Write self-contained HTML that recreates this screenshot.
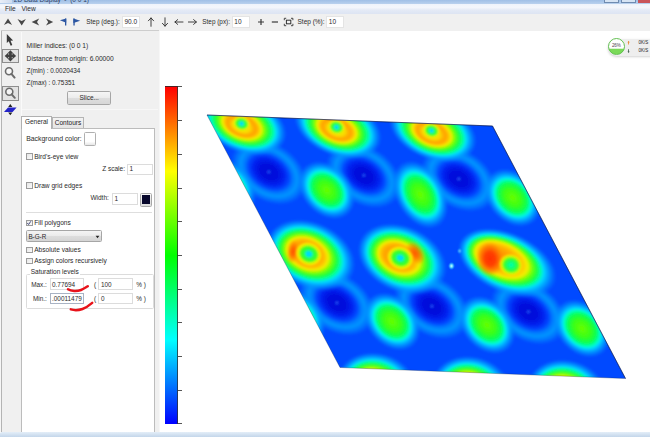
<!DOCTYPE html>
<html><head><meta charset="utf-8">
<style>
html,body{margin:0;padding:0;background:#fff;}
body{width:650px;height:437px;overflow:hidden;position:relative;font-family:"Liberation Sans",sans-serif;font-size:6.5px;color:#222;}
.a{position:absolute;}
.t{position:absolute;white-space:pre;line-height:8px;height:8px;color:#2a2a2a;}
.inp{position:absolute;background:#fff;border:1px solid #dcdcdc;box-sizing:border-box;}
.cb{position:absolute;width:6.4px;height:6.4px;margin:-0.2px 0 0 -0.2px;box-sizing:border-box;border:0.9px solid #9c9c9c;background:linear-gradient(135deg,#e6e6e6,#fbfbfb);}
.ic{position:absolute;}
</style></head><body>
<!-- title bar -->
<div class="a" style="left:0;top:0;width:650px;height:4px;background:linear-gradient(#9fbfe6,#b9d1ee);"></div>
<div class="a" style="left:0;top:0;width:12px;height:3.4px;background:linear-gradient(90deg,#e9eef7,#cfdcef);"></div>
<div class="a" style="left:0;top:0;width:120px;height:3.6px;overflow:hidden;"><div class="t" style="left:13.8px;top:-3.7px;font-size:6.5px;color:#16284a;opacity:.85;">2D Data Display  -  (0 0 1)</div></div>
<div class="a" style="left:604px;top:0;width:15px;height:2.5px;background:#d6e4f4;border:0.5px solid #6f8bb0;border-top:0;box-sizing:border-box"></div>
<div class="a" style="left:621px;top:0;width:14.5px;height:2.5px;background:#d6e4f4;border:0.5px solid #6f8bb0;border-top:0;box-sizing:border-box"></div>
<div class="a" style="left:637.5px;top:0;width:13px;height:2.5px;background:#c9555a;"></div>
<!-- menu bar -->
<div class="a" style="left:0;top:4px;width:650px;height:10.5px;background:linear-gradient(#eef3fb 0%,#f4f7fc 30%,#e4eaf6 55%,#dbe3f2 100%);"></div>
<div class="a" style="left:0;top:13.6px;width:650px;height:0.8px;background:#c9ccd6;"></div>
<div class="t" style="left:5px;top:4.7px;font-size:6.6px;">File</div>
<div class="t" style="left:21.5px;top:4.7px;font-size:6.6px;">View</div>
<!-- toolbar -->
<div class="a" style="left:0;top:14.4px;width:650px;height:16.2px;background:#f0f0f0;"></div>
<!-- body bg left -->
<div class="a" style="left:0;top:30.5px;width:159px;height:402px;background:#f0f0f0;"></div>
<div class="a" style="left:159px;top:30.5px;width:1px;height:402px;background:#f7f7f7;"></div>
<!-- bottom strip -->
<div class="a" style="left:0;top:432px;width:650px;height:5px;background:linear-gradient(#e4eef8,#c3d6ea);"></div>
<!-- toolbar icons -->
<svg class="a" style="left:0;top:15px" width="650" height="16" viewBox="0 15 650 16">
<g fill="#484848" stroke="none">
<path d="M8 18.6 L12.1 25 L8 23 L3.9 25 Z"/>
<path d="M21.7 25.4 L25.9 19 L21.7 21 L17.5 19 Z"/>
<path d="M31.6 22 L39.2 18.4 L37 22 L39.2 25.6 Z"/>
<path d="M53.2 22 L46 18.4 L48.2 22 L46 25.6 Z"/>
</g>
<g fill="#2c56a2">
<path d="M59.9 20.3 L66.2 18.5 L66.2 22.8 Z"/><rect x="65" y="18.5" width="1.3" height="7"/>
<path d="M80.2 20.7 L73.4 18.5 L73.4 23 Z"/><rect x="73.4" y="18.5" width="1.3" height="7"/>
</g>
<g fill="none" stroke="#2e2e2e" stroke-width="0.9" stroke-linecap="round" stroke-linejoin="round">
<path d="M151 26.3 V18 M148.4 20.8 L151 17.9 L153.6 20.8"/>
<path d="M165 17.8 V26.1 M162.4 23.3 L165 26.2 L167.6 23.3"/>
<path d="M183 22 H175 M177.7 19.6 L174.9 22 L177.7 24.4"/>
<path d="M188.4 22 H196.3 M193.6 19.6 L196.4 22 L193.6 24.4"/>
</g>
<g fill="none" stroke="#3a3a3a" stroke-width="1.2">
<path d="M258 22 H264 M261 19 V25"/>
<path d="M271.8 22 H278"/>
</g>
<g fill="none" stroke="#333" stroke-width="0.9">
<path d="M284.3 20.2 V18.3 H286.2 M291 18.3 H292.9 V20.2 M292.9 23.8 V25.7 H291 M286.2 25.7 H284.3 V23.8"/>
<rect x="286.4" y="20.2" width="4.4" height="3.6" stroke-width="1"/>
</g>
</svg>
<div class="t" style="left:86.3px;top:18.1px;font-size:6.4px;">Step (deg.):</div>
<div class="inp" style="left:122.3px;top:15.5px;width:18.2px;height:12.2px;border-color:#e4e4e4"></div>
<div class="t" style="left:124.4px;top:18.1px;font-size:6.5px;">90.0</div>
<div class="t" style="left:202.3px;top:18.1px;font-size:6.4px;">Step (px):</div>
<div class="inp" style="left:231.8px;top:15.5px;width:18.4px;height:12.2px;border-color:#e4e4e4"></div>
<div class="t" style="left:234.3px;top:18.1px;font-size:6.5px;">10</div>
<div class="t" style="left:297.5px;top:18.1px;font-size:6.5px;">Step (%):</div>
<div class="inp" style="left:326.3px;top:15.5px;width:18.2px;height:12.2px;border-color:#e4e4e4"></div>
<div class="t" style="left:328.8px;top:18.1px;font-size:6.5px;">10</div>
<!-- frame lines -->
<div class="a" style="left:0;top:30.5px;width:1.4px;height:402px;background:#f6f6f6;"></div>
<div class="a" style="left:1.2px;top:30.2px;width:158px;height:0.7px;background:#cdcdcd;"></div>
<div class="a" style="left:1.2px;top:30.6px;width:0.7px;height:401.5px;background:#b4b4b4;"></div>
<div class="a" style="left:20.6px;top:31.5px;width:0.6px;height:84px;background:#fafafa;"></div>
<!-- left strip icons -->
<div class="a" style="left:2.2px;top:49.2px;width:16.5px;height:14.3px;box-sizing:border-box;border:0.8px solid #8e8e8e;background:#e3e3e3;"></div>
<div class="a" style="left:2.2px;top:86px;width:16.5px;height:14.6px;box-sizing:border-box;border:0.8px solid #8e8e8e;background:#e3e3e3;"></div>
<svg class="a" style="left:0;top:31px" width="22" height="88" viewBox="0 31 22 88">
<path d="M6.8 33.9 L6.8 43 L8.8 41.3 L10.7 45.8 L12.3 45.1 L10.5 40.8 L13.1 40.6 Z" fill="#3a3a3a"/>
<g fill="#404040">
<path d="M10.4 50.2 L13.5 53.6 L11.7 53.6 L11.7 54.6 L12.7 54.6 L12.7 52.8 L16.1 55.9 L12.7 59 L12.7 57.2 L11.7 57.2 L11.7 58.2 L13.5 58.2 L10.4 61.6 L7.3 58.2 L9.1 58.2 L9.1 57.2 L8.1 57.2 L8.1 59 L4.7 55.9 L8.1 52.8 L8.1 54.6 L9.1 54.6 L9.1 53.6 L7.3 53.6 Z"/>
</g>
<g fill="none" stroke="#6c6c6c" stroke-width="1.6">
<circle cx="9" cy="71.3" r="3.5" fill="#f8f8f8"/><path d="M11.4 73.8 L14.6 77.6" stroke-width="2" stroke-linecap="round"/>
<circle cx="9.3" cy="91.8" r="3.5" fill="#f4f4f4"/><path d="M11.7 94.3 L14.8 97.8" stroke-width="2" stroke-linecap="round"/>
</g>
<path d="M4 112 L8 107.6 L16.6 107.6 L12.6 112 Z" fill="#2323c8"/>
<path d="M10.3 104 L12.4 107 L8.2 107 Z M10.3 115.2 L12.4 112.4 L8.2 112.4 Z" fill="#222"/>
</svg>
<!-- side panel -->
<div class="t" style="left:26.6px;top:42px;font-size:6.7px;">Miller indices: (0 0 1)</div>
<div class="t" style="left:26.6px;top:54.5px;font-size:6.68px;">Distance from origin: 6.00000</div>
<div class="t" style="left:26.6px;top:66.7px;font-size:6.37px;">Z(min) : 0.0020434</div>
<div class="t" style="left:26.6px;top:78.7px;font-size:6.37px;">Z(max) : 0.75351</div>
<div class="a" style="left:67.4px;top:90.6px;width:43.6px;height:14.2px;box-sizing:border-box;border:0.8px solid #a6a6a6;border-radius:1.6px;background:linear-gradient(#f6f6f6 0%,#ececec 48%,#dedede 52%,#d6d6d6 100%);"></div>
<div class="t" style="left:67.6px;top:93.6px;width:43.2px;text-align:center;font-size:6.5px;">Slice...</div>
<div class="a" style="left:22px;top:108.6px;width:136px;height:0.8px;background:#f7f7f7;"></div>
<!-- tab page -->
<div class="a" style="left:20.8px;top:128px;width:134.6px;height:304.2px;box-sizing:border-box;border:0.8px solid #bcbcbc;border-bottom:0;background:#fff;"></div>
<div class="a" style="left:52px;top:117.3px;width:32px;height:11px;box-sizing:border-box;border:0.8px solid #b4b4b4;border-bottom:0;background:linear-gradient(#f3f3f3,#e4e4e4);"></div>
<div class="a" style="left:20.8px;top:115.8px;width:31.4px;height:13px;box-sizing:border-box;border:0.8px solid #b0b0b0;border-bottom:0;background:#fff;"></div>
<div class="t" style="left:20.8px;top:117.6px;width:31.4px;text-align:center;font-size:6.5px;">General</div>
<div class="t" style="left:52px;top:118.6px;width:32px;text-align:center;font-size:6.5px;color:#1c1c1c;">Contours</div>
<div class="t" style="left:26.2px;top:134.8px;font-size:6.9px;">Background color:</div>
<div class="a" style="left:83.8px;top:132px;width:12px;height:13.8px;box-sizing:border-box;border:0.8px solid #b0b0b0;border-radius:1.5px;background:linear-gradient(#fff 70%,#e6e6e6);"></div>
<div class="cb" style="left:26.4px;top:153.3px;"></div>
<div class="t" style="left:34.2px;top:152.7px;font-size:6.6px;">Bird's-eye view</div>
<div class="t" style="left:102.2px;top:164.8px;font-size:6.5px;">Z scale:</div>
<div class="inp" style="left:126.5px;top:163.5px;width:26.4px;height:11.6px;"></div>
<div class="t" style="left:129.6px;top:164.8px;font-size:6.5px;">1</div>
<div class="cb" style="left:26.4px;top:182.3px;"></div>
<div class="t" style="left:34.2px;top:181.8px;font-size:6.6px;">Draw grid edges</div>
<div class="t" style="left:90.4px;top:194.4px;font-size:6.5px;">Width:</div>
<div class="inp" style="left:111.5px;top:193px;width:26.4px;height:12px;"></div>
<div class="t" style="left:114.6px;top:194.6px;font-size:6.5px;">1</div>
<div class="a" style="left:140.3px;top:192.6px;width:11.8px;height:14px;box-sizing:border-box;border:0.8px solid #a8a8a8;border-radius:1.5px;background:linear-gradient(#f8f8f8,#dcdcdc);"></div>
<div class="a" style="left:142.2px;top:195.3px;width:8px;height:8.8px;background:#07072c;"></div>
<div class="a" style="left:26px;top:212px;width:126px;height:0.7px;background:#dedede;"></div>
<div class="cb" style="left:26.4px;top:220.2px;"></div>
<svg class="a" style="left:26.4px;top:220.2px" width="6" height="6" viewBox="0 0 6 6"><path d="M1.3 3 L2.6 4.5 L4.8 1.3" fill="none" stroke="#333a70" stroke-width="0.9"/></svg>
<div class="t" style="left:34.2px;top:219px;font-size:6.6px;">Fill polygons</div>
<div class="a" style="left:26px;top:230px;width:76px;height:12.2px;box-sizing:border-box;border:0.8px solid #a6a6a6;border-radius:1.5px;background:linear-gradient(#f4f4f4 0%,#ebebeb 48%,#dddddd 52%,#d4d4d4 100%);"></div>
<div class="t" style="left:28.4px;top:232.5px;font-size:6.3px;">B-G-R</div>
<svg class="a" style="left:95px;top:234.5px" width="5" height="4" viewBox="0 0 5 4"><path d="M0.6 0.8 L4.4 0.8 L2.5 3.2 Z" fill="#222"/></svg>
<div class="cb" style="left:26.4px;top:246.7px;"></div>
<div class="t" style="left:34.2px;top:245.6px;font-size:6.6px;">Absolute values</div>
<div class="cb" style="left:26.4px;top:257.8px;"></div>
<div class="t" style="left:34.2px;top:256.7px;font-size:6.6px;">Assign colors recursively</div>
<!-- group box -->
<div class="a" style="left:26px;top:273.5px;width:127.5px;height:35.4px;box-sizing:border-box;border:0.8px solid #dcdcdc;border-radius:1.5px;"></div>
<div class="t" style="left:29.5px;top:267.5px;font-size:6.5px;background:#fff;padding:0 1.2px;">Saturation levels</div>
<div class="t" style="left:31.2px;top:280.7px;font-size:6.4px;">Max.:</div>
<div class="inp" style="left:49.6px;top:278.4px;width:34.3px;height:12.1px;"></div>
<div class="t" style="left:52px;top:280.7px;font-size:6.4px;">0.77694</div>
<div class="t" style="left:94px;top:280.7px;font-size:6.4px;">(</div>
<div class="inp" style="left:98px;top:278.4px;width:34.8px;height:12.1px;"></div>
<div class="t" style="left:100.9px;top:280.7px;font-size:6.4px;">100</div>
<div class="t" style="left:136.2px;top:280.7px;font-size:6.4px;">% )</div>
<div class="t" style="left:33px;top:295px;font-size:6.4px;">Min.:</div>
<div class="inp" style="left:49.6px;top:293px;width:34.3px;height:11.4px;border-color:#a9b3c4;"></div>
<div class="t" style="left:52px;top:295px;font-size:6.4px;">.00011479</div>
<div class="t" style="left:94px;top:295px;font-size:6.4px;">(</div>
<div class="inp" style="left:98px;top:293px;width:34.8px;height:11.4px;"></div>
<div class="t" style="left:100.9px;top:295px;font-size:6.4px;">0</div>
<div class="t" style="left:136.2px;top:295px;font-size:6.4px;">% )</div>
<!-- red scribbles -->
<svg class="a" style="left:60px;top:280px" width="40" height="34" viewBox="60 280 40 34">
<g fill="none" stroke="#e8121a" stroke-width="2.5" stroke-linecap="round">
<path d="M68 289.2 C71 291.3 77 291.5 81 290 C84 288.9 86 287.3 87.8 286.2"/>
<path d="M70.8 309.4 C74 310.4 79 310.2 82.5 309 C86.5 307.6 89.5 305.2 92.2 302.9"/>
</g></svg>
<!-- colorbar -->
<div class="a" style="left:164.7px;top:86.7px;width:12.9px;height:337px;background:linear-gradient(#ff0000 0%,#ffff00 25%,#00ff00 50%,#00ffff 75%,#0000ff 100%);"></div>
<div class="a" style="left:164.7px;top:86.4px;width:13.2px;height:0.7px;background:#502020;"></div>
<div class="a" style="left:177.4px;top:86.4px;width:0.7px;height:337.6px;background:#303030;opacity:.8"></div>
<div class="a" style="left:177.8px;top:86.4px;width:4.2px;height:0.7px;background:#555;"></div>
<div class="a" style="left:177.8px;top:120.1px;width:4.2px;height:0.7px;background:#555;"></div>
<div class="a" style="left:177.8px;top:153.8px;width:4.2px;height:0.7px;background:#555;"></div>
<div class="a" style="left:177.8px;top:187.5px;width:4.2px;height:0.7px;background:#555;"></div>
<div class="a" style="left:177.8px;top:221.2px;width:4.2px;height:0.7px;background:#555;"></div>
<div class="a" style="left:177.8px;top:254.9px;width:4.2px;height:0.7px;background:#555;"></div>
<div class="a" style="left:177.8px;top:288.6px;width:4.2px;height:0.7px;background:#555;"></div>
<div class="a" style="left:177.8px;top:322.3px;width:4.2px;height:0.7px;background:#555;"></div>
<div class="a" style="left:177.8px;top:356.0px;width:4.2px;height:0.7px;background:#555;"></div>
<div class="a" style="left:177.8px;top:389.7px;width:4.2px;height:0.7px;background:#555;"></div>
<div class="a" style="left:177.8px;top:423.4px;width:4.2px;height:0.7px;background:#555;"></div>
<svg class="a" style="left:0;top:0" width="650" height="437" viewBox="0 0 650 437">
<defs>
<clipPath id="para"><path d="M207.0 115.0 L492.5 126.0 L625.5 378.5 L340.0 367.5 Z"/></clipPath>
<radialGradient id="gr" cx="0.5" cy="0.5" r="0.5" fx="0.425" fy="0.5"><stop offset="0" stop-color="#ffa800"/><stop offset="0.3" stop-color="#ffa400"/><stop offset="0.39" stop-color="#ffc000"/><stop offset="0.46" stop-color="#f0f000"/><stop offset="0.54" stop-color="#70ff08"/><stop offset="0.63" stop-color="#18ff40"/><stop offset="0.71" stop-color="#00ffb0"/><stop offset="0.77" stop-color="#00d8ff"/><stop offset="0.87" stop-color="#00a0ff" stop-opacity="0.8"/><stop offset="1" stop-color="#0080ff" stop-opacity="0"/></radialGradient>
<radialGradient id="gr0" cx="0.5" cy="0.5" r="0.5" fx="0.49" fy="0.56"><stop offset="0" stop-color="#e8f000"/><stop offset="0.19" stop-color="#f8e000"/><stop offset="0.27" stop-color="#ffb000"/><stop offset="0.33" stop-color="#ffa400"/><stop offset="0.38" stop-color="#ffc000"/><stop offset="0.44" stop-color="#f0f000"/><stop offset="0.52" stop-color="#70ff08"/><stop offset="0.61" stop-color="#18ff40"/><stop offset="0.71" stop-color="#00ffb0"/><stop offset="0.77" stop-color="#00d8ff"/><stop offset="0.87" stop-color="#00a0ff" stop-opacity="0.8"/><stop offset="1" stop-color="#0080ff" stop-opacity="0"/></radialGradient>
<radialGradient id="gc" cx="0.5" cy="0.5" r="0.5"><stop offset="0" stop-color="#00c8ff"/><stop offset="0.18" stop-color="#00e0ff"/><stop offset="0.32" stop-color="#20ff50"/><stop offset="0.62" stop-color="#48ff18"/><stop offset="0.74" stop-color="#e8f400"/><stop offset="0.86" stop-color="#f8e800"/><stop offset="1" stop-color="#ffa000" stop-opacity="0"/></radialGradient>
<radialGradient id="gd" cx="0.5" cy="0.5" r="0.5"><stop offset="0" stop-color="#000cd8"/><stop offset="0.24" stop-color="#0010de"/><stop offset="0.4" stop-color="#0024f0"/><stop offset="0.53" stop-color="#0048ff"/><stop offset="0.63" stop-color="#007cff" stop-opacity="0.95"/><stop offset="0.74" stop-color="#00a2ff" stop-opacity="0.85"/><stop offset="0.86" stop-color="#0094ff" stop-opacity="0.55"/><stop offset="1" stop-color="#0080ff" stop-opacity="0"/></radialGradient>
<radialGradient id="gb" cx="0.5" cy="0.5" r="0.5"><stop offset="0" stop-color="#68ff00"/><stop offset="0.3" stop-color="#38ff18"/><stop offset="0.5" stop-color="#08ff58"/><stop offset="0.62" stop-color="#00ffc8"/><stop offset="0.69" stop-color="#00d8ff"/><stop offset="0.82" stop-color="#00a0ff" stop-opacity="0.8"/><stop offset="1" stop-color="#0080ff" stop-opacity="0"/></radialGradient>
<radialGradient id="gs" cx="0.5" cy="0.5" r="0.5" fx="0.36" fy="0.47"><stop offset="0" stop-color="#ff8c00"/><stop offset="0.2" stop-color="#ff9800"/><stop offset="0.36" stop-color="#ffb000"/><stop offset="0.46" stop-color="#ffd000"/><stop offset="0.53" stop-color="#f0f000"/><stop offset="0.6" stop-color="#70ff08"/><stop offset="0.68" stop-color="#18ff40"/><stop offset="0.74" stop-color="#00ffb0"/><stop offset="0.79" stop-color="#00d8ff"/><stop offset="0.88" stop-color="#00a0ff" stop-opacity="0.8"/><stop offset="1" stop-color="#0080ff" stop-opacity="0"/></radialGradient>
<radialGradient id="gred2" cx="0.5" cy="0.5" r="0.5"><stop offset="0" stop-color="#ff4800" stop-opacity="0.9"/><stop offset="0.4" stop-color="#ff5800" stop-opacity="0.75"/><stop offset="0.75" stop-color="#ff8000" stop-opacity="0.45"/><stop offset="1" stop-color="#ff9800" stop-opacity="0"/></radialGradient>
<radialGradient id="gred" cx="0.5" cy="0.5" r="0.5"><stop offset="0" stop-color="#ff3000"/><stop offset="0.4" stop-color="#ff3c00" stop-opacity="0.95"/><stop offset="0.72" stop-color="#ff7000" stop-opacity="0.7"/><stop offset="1" stop-color="#ff9800" stop-opacity="0"/></radialGradient>
<radialGradient id="gsc" cx="0.5" cy="0.5" r="0.5"><stop offset="0" stop-color="#00ffb8"/><stop offset="0.3" stop-color="#10ff70"/><stop offset="0.6" stop-color="#48ff18"/><stop offset="0.74" stop-color="#d8f800"/><stop offset="0.86" stop-color="#f8e000" stop-opacity="0.9"/><stop offset="1" stop-color="#ffa000" stop-opacity="0"/></radialGradient>
<radialGradient id="gdd" cx="0.5" cy="0.5" r="0.5"><stop offset="0" stop-color="#3068ff"/><stop offset="0.4" stop-color="#1c48f4" stop-opacity="0.9"/><stop offset="1" stop-color="#0010dc" stop-opacity="0"/></radialGradient>
<radialGradient id="gdot" cx="0.5" cy="0.5" r="0.5"><stop offset="0" stop-color="#d0ffff"/><stop offset="0.4" stop-color="#60e0ff" stop-opacity="0.9"/><stop offset="1" stop-color="#0090ff" stop-opacity="0"/></radialGradient>
<filter id="soft" x="190" y="100" width="460" height="300" filterUnits="userSpaceOnUse"><feGaussianBlur stdDeviation="1.1"/></filter>
</defs>
<g clip-path="url(#para)"><g filter="url(#soft)">
<rect x="200" y="110" width="440" height="275" fill="#0048ff"/>
<ellipse cx="268.8" cy="171.9" rx="41.5" ry="29.0" transform="rotate(33 268.8 171.9)" fill="url(#gd)"/>
<ellipse cx="363.8" cy="175.4" rx="41.5" ry="29.0" transform="rotate(33 363.8 175.4)" fill="url(#gd)"/>
<ellipse cx="458.8" cy="178.9" rx="41.5" ry="29.0" transform="rotate(33 458.8 178.9)" fill="url(#gd)"/>
<ellipse cx="336.9" cy="302.8" rx="41.5" ry="29.0" transform="rotate(33 336.9 302.8)" fill="url(#gd)"/>
<ellipse cx="431.9" cy="306.3" rx="41.5" ry="29.0" transform="rotate(33 431.9 306.3)" fill="url(#gd)"/>
<ellipse cx="528.4" cy="311.8" rx="41.5" ry="29.0" transform="rotate(33 528.4 311.8)" fill="url(#gd)"/>
<ellipse cx="243.0" cy="123.9" rx="46.0" ry="28.5" transform="rotate(22 243.0 123.9)" fill="url(#gr0)"/>
<ellipse cx="338.0" cy="127.4" rx="46.0" ry="28.5" transform="rotate(22 338.0 127.4)" fill="url(#gr0)"/>
<ellipse cx="433.0" cy="130.9" rx="46.0" ry="28.5" transform="rotate(22 433.0 130.9)" fill="url(#gr0)"/>
<ellipse cx="310.9" cy="255.2" rx="47.0" ry="33.0" transform="rotate(25 310.9 255.2)" fill="url(#gr)"/>
<ellipse cx="402.4" cy="259.2" rx="47.0" ry="33.0" transform="rotate(25 402.4 259.2)" fill="url(#gr)"/>
<ellipse cx="507.5" cy="263.0" rx="52.5" ry="30.0" transform="rotate(24 507.5 263.0)" fill="url(#gs)"/>
<ellipse cx="376.8" cy="385.8" rx="41.0" ry="33.0" transform="rotate(15 376.8 385.8)" fill="url(#gr)"/>
<ellipse cx="471.8" cy="389.3" rx="41.0" ry="33.0" transform="rotate(15 471.8 389.3)" fill="url(#gr)"/>
<ellipse cx="566.8" cy="392.8" rx="41.0" ry="33.0" transform="rotate(15 566.8 392.8)" fill="url(#gr)"/>
<ellipse cx="227.7" cy="187.2" rx="33.0" ry="24.5" transform="rotate(47 227.7 187.2)" fill="url(#gb)"/>
<ellipse cx="326.7" cy="190.2" rx="33.0" ry="24.5" transform="rotate(47 326.7 190.2)" fill="url(#gb)"/>
<ellipse cx="420.3" cy="194.6" rx="37.0" ry="24.5" transform="rotate(60 420.3 194.6)" fill="url(#gb)"/>
<ellipse cx="512.7" cy="197.7" rx="33.0" ry="24.5" transform="rotate(47 512.7 197.7)" fill="url(#gb)"/>
<ellipse cx="297.0" cy="318.0" rx="33.0" ry="24.5" transform="rotate(47 297.0 318.0)" fill="url(#gb)"/>
<ellipse cx="392.0" cy="321.5" rx="33.0" ry="24.5" transform="rotate(47 392.0 321.5)" fill="url(#gb)"/>
<ellipse cx="487.0" cy="325.0" rx="33.0" ry="24.5" transform="rotate(47 487.0 325.0)" fill="url(#gb)"/>
<ellipse cx="582.0" cy="328.5" rx="33.0" ry="24.5" transform="rotate(47 582.0 328.5)" fill="url(#gb)"/>
<ellipse cx="241.5" cy="123.7" rx="9.5" ry="8.0" transform="rotate(22 241.5 123.7)" fill="url(#gc)"/>
<ellipse cx="336.5" cy="127.2" rx="9.5" ry="8.0" transform="rotate(22 336.5 127.2)" fill="url(#gc)"/>
<ellipse cx="431.5" cy="130.7" rx="9.5" ry="8.0" transform="rotate(22 431.5 130.7)" fill="url(#gc)"/>
<ellipse cx="293.0" cy="251.5" rx="6.0" ry="12.0" transform="rotate(8 293.0 251.5)" fill="url(#gred2)"/>
<ellipse cx="308.8" cy="254.0" rx="14.0" ry="12.0" transform="rotate(25 308.8 254.0)" fill="url(#gc)"/>
<ellipse cx="415.5" cy="253.0" rx="8.0" ry="13.0" transform="rotate(-32 415.5 253.0)" fill="url(#gred2)"/>
<ellipse cx="400.3" cy="258.0" rx="14.0" ry="12.0" transform="rotate(25 400.3 258.0)" fill="url(#gc)"/>
<ellipse cx="490.0" cy="258.8" rx="14.0" ry="17.5" transform="rotate(-8 490.0 258.8)" fill="url(#gred)"/>
<ellipse cx="511.0" cy="265.0" rx="12.5" ry="11.5" transform="rotate(20 511.0 265.0)" fill="url(#gsc)"/>
<circle cx="268.8" cy="171.9" r="2.6" fill="url(#gdd)"/>
<circle cx="363.8" cy="175.4" r="2.6" fill="url(#gdd)"/>
<circle cx="458.8" cy="178.9" r="2.6" fill="url(#gdd)"/>
<circle cx="336.9" cy="302.8" r="2.6" fill="url(#gdd)"/>
<circle cx="431.9" cy="306.3" r="2.6" fill="url(#gdd)"/>
<circle cx="528.4" cy="311.8" r="2.6" fill="url(#gdd)"/>
</g>
<ellipse cx="451.5" cy="266.0" rx="3.6" ry="4.2" transform="rotate(0 451.5 266.0)" fill="url(#gdot)"/>
<ellipse cx="459.6" cy="251" rx="3" ry="3.4" fill="url(#gdot)" opacity="0.45"/>
</g>
<path d="M207.0 115.0 L492.5 126.0 L625.5 378.5 L340.0 367.5 Z" fill="none" stroke="#102040" stroke-opacity="0.5" stroke-width="0.6"/>
<path d="M207.0 115.0 L492.5 126.0 L625.5 378.5" fill="none" stroke="#001050" stroke-opacity="0.7" stroke-width="0.8"/>
</svg><!-- widget -->
<div class="a" style="left:607.5px;top:38.5px;width:50px;height:17px;border-radius:8.5px;background:#eeeeee;box-shadow:0 1px 2.5px rgba(0,0,0,.18);"></div>
<div class="a" style="left:607.8px;top:38.4px;width:17px;height:17px;box-sizing:border-box;border-radius:50%;border:1.3px solid #62c050;background:linear-gradient(#ffffff 62%,#7ada58 67%);"></div>
<div class="t" style="left:607.8px;top:42px;width:17px;text-align:center;font-size:4.5px;color:#4a4450;letter-spacing:-0.1px;">26%</div>
<svg class="a" style="left:626px;top:40px" width="6" height="14" viewBox="0 0 6 14"><path d="M2.6 0.8 L3.7 2.4 H3 V4.6 H2.2 V2.4 H1.5 Z" fill="#e8842c"/><path d="M2.6 13 L3.7 11.4 H3 V9.2 H2.2 V11.4 H1.5 Z" fill="#3c5a46"/></svg>
<div class="t" style="left:638.6px;top:39.2px;font-size:4.5px;color:#222;">0K/S</div>
<div class="t" style="left:638.6px;top:47.2px;font-size:4.5px;color:#222;">0K/S</div>
</body></html>
